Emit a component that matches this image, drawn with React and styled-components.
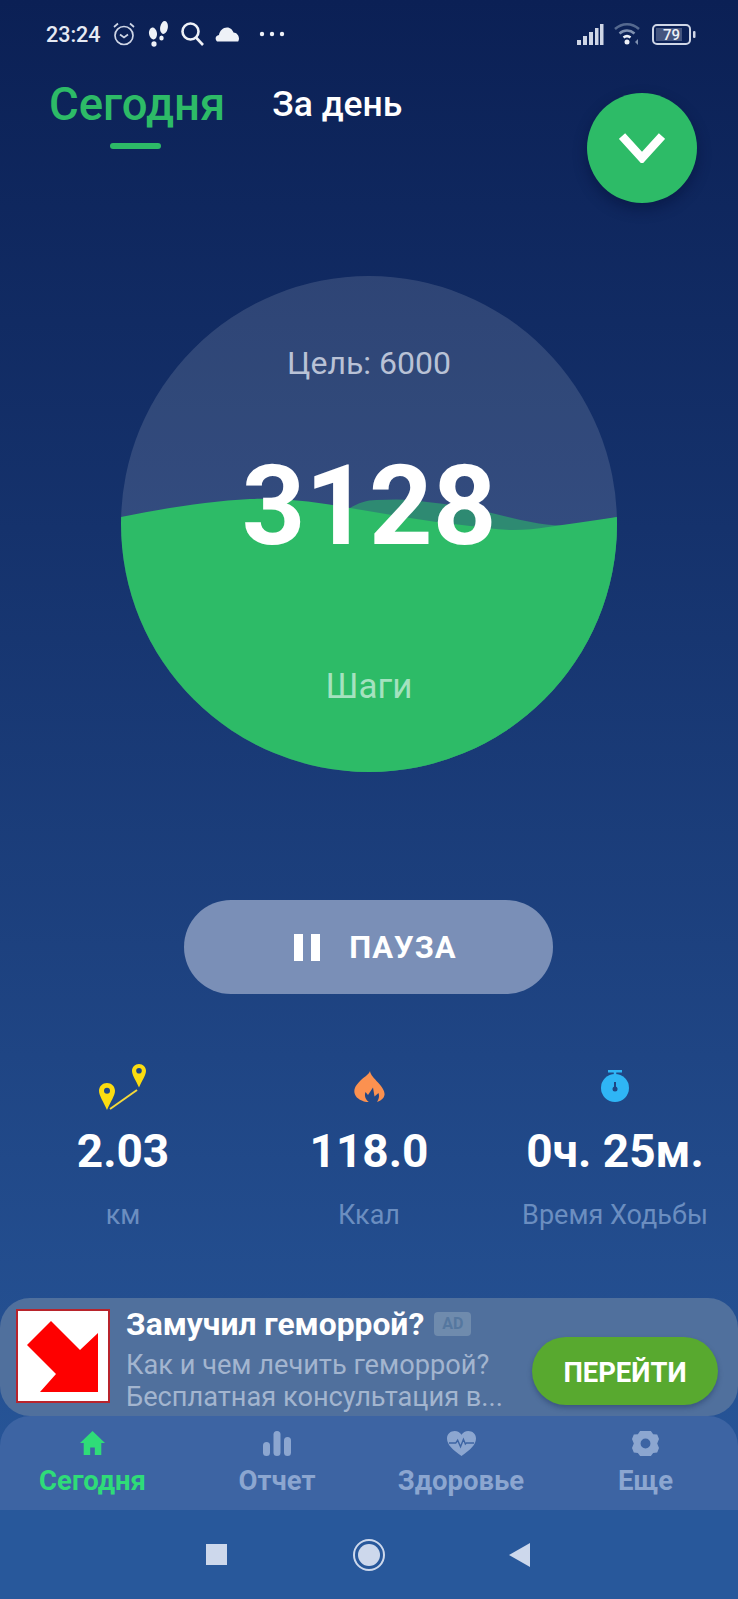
import React from 'react'
import styled, { createGlobalStyle } from 'styled-components'

const GlobalStyle = createGlobalStyle`
	html, body {
		margin: 0;
		padding: 0;
		background: #0a1f54;
	}
	* {
		box-sizing: border-box;
	}
`

const Page = styled.div`
	position: relative;
	width: 738px;
	height: 1599px;
	display: flex;
	flex-direction: column;
	overflow: hidden;
	font-family: Roboto, "Liberation Sans", sans-serif;
	color: #fff;
	background: linear-gradient(180deg, #0b2055 0%, #15326c 33%, #1f4584 66%, #295a9e 100%);
`

const StatusBar = styled.div`
	height: 68px;
	padding: 0 42px 0 46px;
	display: flex;
	align-items: center;
	justify-content: space-between;
`

const StatusGroup = styled.div`
	display: flex;
	align-items: center;
`

const Clock = styled.span`
	font-size: 21.5px;
	font-weight: 500;
	color: #e6eaf4;
	margin-right: 11px;
`

const Tabs = styled.div`
	height: 85px;
	padding-left: 49px;
	display: flex;
	align-items: flex-start;
	gap: 47px;
`

const Tab = styled.div`
	position: relative;
	height: 81px;
	display: flex;
	align-items: flex-start;
	font-size: ${p => (p.$active ? '45.5px' : '35.5px')};
	font-weight: 500;
	line-height: ${p => (p.$active ? '74px' : '73px')};
	color: ${p => (p.$active ? '#2dbb67' : '#fff')};

	${p => p.$active && `
		&::after {
			content: '';
			position: absolute;
			left: 61px;
			bottom: 0;
			width: 51px;
			height: 6px;
			border-radius: 3px;
			background: #2dbb67;
		}
	`}
`

const Fab = styled.div`
	position: absolute;
	left: 587px;
	top: 93px;
	width: 110px;
	height: 110px;
	border-radius: 50%;
	background: #2dbb67;
	box-shadow: 0 6px 14px rgba(4, 14, 50, 0.45);
	display: flex;
	align-items: center;
	justify-content: center;
`

const Gauge = styled.div`
	position: relative;
	width: 496px;
	height: 496px;
	margin: 123px auto 0;
	border-radius: 50%;
	overflow: hidden;
	background: rgba(255, 255, 255, 0.13);
	display: flex;
	flex-direction: column;
	align-items: center;
`

const WaveSvg = styled.svg`
	position: absolute;
	inset: 0;
	width: 100%;
	height: 100%;
`

const GaugeText = styled.div`
	position: relative;
	margin-top: ${p => p.$top}px;
	font-size: ${p => p.$size}px;
	font-weight: ${p => p.$weight || 400};
	line-height: ${p => p.$line}px;
	color: ${p => p.$color};
`

const PauseButton = styled.div`
	width: 369px;
	height: 94px;
	margin: 128px 0 0 184px;
	padding-left: 14px;
	border-radius: 47px;
	background: #7a8fb7;
	display: flex;
	align-items: center;
	justify-content: center;
	gap: 29px;
	font-size: 31px;
	font-weight: 700;
	letter-spacing: 1px;
`

const PauseBars = styled.span`
	width: 26px;
	height: 27px;
	border-left: 9px solid #fff;
	border-right: 9px solid #fff;
`

const Stats = styled.div`
	margin-top: 58px;
	display: grid;
	grid-template-columns: 246px 246px 246px;
`

const Stat = styled.div`
	display: flex;
	flex-direction: column;
	align-items: center;
`

const StatIcon = styled.div`
	height: 58px;
	padding-bottom: ${p => p.$lift || 0}px;
	display: flex;
	align-items: flex-end;
`

const StatValue = styled.div`
	margin-top: 14px;
	font-size: 46px;
	font-weight: 700;
	line-height: 54px;
	white-space: nowrap;
`

const StatLabel = styled.div`
	margin-top: 21px;
	font-size: 27px;
	line-height: 32px;
	color: #6b8ec0;
	white-space: nowrap;
`

const Ad = styled.div`
	margin-top: auto;
	height: 118px;
	padding: 11px 20px 0 16px;
	display: flex;
	align-items: flex-start;
	border-radius: 30px;
	background: #50709d;
`

const AdImage = styled.div`
	flex: none;
	width: 94px;
	height: 94px;
	border: 2px solid #b8242c;
	background: #fff;
`

const AdBody = styled.div`
	flex: 1;
	min-width: 0;
	padding-left: 16px;
`

const AdTitle = styled.div`
	display: flex;
	align-items: center;
	gap: 10px;
	font-size: 31.8px;
	font-weight: 700;
	line-height: 32px;
	margin-top: -1px;
`

const AdBadge = styled.span`
	width: 37px;
	height: 24px;
	border-radius: 4px;
	background: #6f8bad;
	color: #55779f;
	font-size: 16px;
	font-weight: 700;
	line-height: 24px;
	text-align: center;
`

const AdLine = styled.div`
	margin-top: ${p => p.$top || 0}px;
	font-size: 27.2px;
	line-height: 32px;
	color: #a3b5cf;
	white-space: nowrap;
`

const AdButton = styled.div`
	flex: none;
	width: 186px;
	height: 68px;
	margin-top: 28px;
	margin-left: -20px;
	padding-top: 3px;
	border-radius: 34px;
	background: #58a92f;
	box-shadow: 0 3px 5px rgba(20, 40, 80, 0.35);
	display: flex;
	align-items: center;
	justify-content: center;
	font-size: 27.4px;
	font-weight: 700;
`

const BottomNav = styled.div`
	height: 94px;
	display: grid;
	grid-template-columns: 185px 184px 184px 185px;
	border-radius: 30px 30px 0 0;
	background: #3d64a3;
`

const NavItem = styled.div`
	padding-top: 14px;
	display: flex;
	flex-direction: column;
	align-items: center;
	color: ${p => (p.$active ? '#2fdc78' : '#8ca6d0')};
`

const NavIcon = styled.div`
	height: 26px;
	display: flex;
	align-items: center;
`

const NavLabel = styled.div`
	margin-top: 10px;
	font-size: 27.5px;
	font-weight: 700;
	line-height: 30px;
`

const SystemBar = styled.div`
	height: 89px;
	background: #28589b;
	display: grid;
	grid-template-columns: 153px 153px 153px;
	justify-content: center;
	justify-items: center;
	align-items: center;
`

const SquareKey = styled.span`
	width: 21px;
	height: 21px;
	background: #cdd8ec;
`

const RoundKey = styled.span`
	width: 32px;
	height: 32px;
	border-radius: 50%;
	border: 2px solid #cdd8ec;
	padding: 3px;
	background: #cdd8ec content-box;
`

const BackKey = styled.span`
	width: 0;
	height: 0;
	margin-right: 5px;
	border-top: 12px solid transparent;
	border-bottom: 12px solid transparent;
	border-right: 21px solid #cdd8ec;
`

const StatusIcons = () => (
	<>
		<svg width="24" height="26" viewBox="0 0 24 26" fill="none" stroke="#cfd6e6" strokeWidth="1.7" style={{ marginRight: 12 }}>
			<circle cx="12" cy="14.5" r="9" />
			<path d="M8 13.5l4 3 4-3" />
			<path d="M2 6l4-3.5M22 6l-4-3.5" />
		</svg>
		<svg width="21" height="26" viewBox="0 0 21 26" fill="#eef1f7" style={{ marginRight: 11 }}>
			<ellipse cx="5" cy="12.500" rx="4" ry="6" transform="rotate(-8 5 12.500)" />
			<ellipse cx="6" cy="23" rx="2.600" ry="2.800" />
			<ellipse cx="16" cy="6.500" rx="3.800" ry="6.500" transform="rotate(10 16 6.500)" />
			<ellipse cx="13.500" cy="17" rx="2.200" ry="2.500" />
		</svg>
		<svg width="24" height="26" viewBox="0 0 24 26" fill="none" stroke="#eef1f7" strokeWidth="2.6" style={{ marginRight: 11 }}>
			<circle cx="10.5" cy="10.5" r="8" />
			<path d="M16 16.5l7 7.5" />
		</svg>
		<svg width="24" height="16" viewBox="0 0 24 16" fill="#eef1f7" style={{ marginRight: 20 }}>
			<path d="M2 15.5C-.5 13 .5 9.5 4 9c.5-4 4-7.5 8-7.5 3.500 0 5.500 2.500 6.500 5 3 0 5.500 3 5.500 6 0 1-.3 2-.8 3z" />
		</svg>
		<svg width="26" height="6" viewBox="0 0 26 6" fill="#eef1f7">
			<circle cx="3" cy="3" r="2.200" />
			<circle cx="13" cy="3" r="2.200" />
			<circle cx="23" cy="3" r="2.200" />
		</svg>
	</>
)

const SystemIcons = () => (
	<>
		<svg width="27" height="21" viewBox="0 0 27 21" fill="#cfd6e6" style={{ marginRight: 10 }}>
			<rect x="0" y="16" width="4" height="5" />
			<rect x="6" y="12" width="4" height="9" />
			<rect x="12" y="8" width="4" height="13" />
			<rect x="18" y="4" width="3.500" height="17" />
			<rect x="23" y="0" width="3.500" height="21" />
		</svg>
		<svg width="28" height="24" viewBox="0 0 28 24" fill="none" style={{ marginRight: 10 }}>
			<path d="M1 7c7-6.500 17-6.500 24 0" stroke="#55698f" strokeWidth="2.500" />
			<path d="M5.500 11.500c4.500-4 10.500-4 15 0" stroke="#7f90b0" strokeWidth="2.500" />
			<path d="M9.500 15.500c2-1.600 5-1.600 7 0" stroke="#eef1f7" strokeWidth="2.500" />
			<circle cx="13" cy="20" r="2.500" fill="#eef1f7" />
			<path d="M24 17l-3 3 3 3z" fill="#7f90b0" />
		</svg>
		<svg width="44" height="21" viewBox="0 0 44 21">
			<rect x="1" y="1" width="37" height="19" rx="4" fill="none" stroke="#cfd6e6" strokeWidth="2" />
			<rect x="4" y="4" width="26" height="13" fill="#44557f" />
			<text x="19.500" y="16" textAnchor="middle" fontSize="15" fontWeight="500" fill="#eef1f7" fontFamily="Roboto, sans-serif">79</text>
			<rect x="41" y="7" width="2.500" height="7" rx="1" fill="#cfd6e6" />
		</svg>
	</>
)

const RouteIcon = () => (
	<svg width="48" height="46" viewBox="0 0 48 46">
		<path fillRule="evenodd" fill="#fbdc10" d="M8 19c4.400 0 8 3.400 8 7.700 0 5-4.500 11-8 19.300-3.500-8.300-8-14.300-8-19.300C0 22.400 3.600 19 8 19zm0 4.700a3 3 0 100 6 3 3 0 000-6z" />
		<path fillRule="evenodd" fill="#fbdc10" d="M40 0c3.900 0 7 3 7 6.800 0 4.500-4 9.700-7 16.700-3-7-7-12.200-7-16.700C33 3 36.100 0 40 0zm0 4a2.800 2.800 0 100 5.600A2.800 2.800 0 0040 4z" />
		<path d="M11 45l27-19" stroke="#f5d93a" strokeWidth="2" />
	</svg>
)

const FlameIcon = () => (
	<svg width="31" height="31" viewBox="0 0 31 31">
		<path fill="#fb9150" d="M16 0c.5 4 4 7 8 11.500 4 4.500 7 8.500 6.500 12.500-.5 3-3 5.500-7.500 7 2-2.500 2.500-6 1.500-9l-4 3.500-1.500-9-5 7.500-2.500-3c-1.500 4 0 8 4 10.500C7 30.500 1.500 27 .5 22 -.5 17 3 13 6.500 9.500 10 6 14.500 4 16 0z" />
	</svg>
)

const TimerIcon = () => (
	<svg width="28" height="32" viewBox="0 0 28 32">
		<path d="M7 1.300h14M14 1.300v6" stroke="#2fb5f5" strokeWidth="2.500" />
		<circle cx="14" cy="18" r="14" fill="#2fb5f5" />
		<path d="M14 12v7" stroke="#1f4584" strokeWidth="2" />
		<circle cx="14" cy="19" r="2.500" fill="#1f4584" />
	</svg>
)

const HomeIcon = () => (
	<svg width="25" height="24" viewBox="0 0 27 26" fill="currentColor" preserveAspectRatio="none">
		<path d="M13.500 0L0 13h4v13h7v-8h5v8h7V13h4z" />
	</svg>
)

const BarsIcon = () => (
	<svg width="28" height="25" viewBox="0 0 28 25" fill="currentColor">
		<rect x="0" y="11" width="7" height="14" rx="3.500" />
		<rect x="10.500" y="0" width="7" height="25" rx="3.500" />
		<rect x="21" y="6" width="7" height="19" rx="3.500" />
	</svg>
)

const HeartIcon = () => (
	<svg width="29" height="25" viewBox="0 0 30 27" preserveAspectRatio="none">
		<path fill="currentColor" d="M15 27C6 20 0 15 0 8c0-5 4-8 8-8 3 0 5.500 1.500 7 4 1.500-2.500 4-4 7-4 4 0 8 3 8 8 0 7-6 12-15 19z" />
		<path fill="none" stroke="#3d64a3" strokeWidth="1.500" d="M2 13h7l2-3 3 7 3-8 2 5 1-1h8" />
	</svg>
)

const GearIcon = () => (
	<svg width="27" height="25" viewBox="0 0 30 28" fill="currentColor" preserveAspectRatio="none">
		<path fillRule="evenodd" d="M9 0h12l2.500 3.500 4.500.5 2 5-2 5 2 5-2 5-4.500.5L21 28H9l-2.500-3.500L2 24l-2-5 2-5-2-5 2-5 4.500-.5zm6 8.500a5.500 5.500 0 100 11 5.500 5.500 0 000-11z" />
	</svg>
)

const stats = [
	{ icon: <RouteIcon />, lift: 0, value: '2.03', label: 'км' },
	{ icon: <FlameIcon />, lift: 8, value: '118.0', label: 'Ккал' },
	{ icon: <TimerIcon />, lift: 8, value: '0ч. 25м.', label: 'Время Ходьбы' },
]

const navItems = [
	{ icon: <HomeIcon />, label: 'Сегодня', active: true },
	{ icon: <BarsIcon />, label: 'Отчет' },
	{ icon: <HeartIcon />, label: 'Здоровье' },
	{ icon: <GearIcon />, label: 'Еще' },
]

export default function App() {
	return (
		<Page>
			<GlobalStyle />
			<StatusBar>
				<StatusGroup>
					<Clock>23:24</Clock>
					<StatusIcons />
				</StatusGroup>
				<StatusGroup>
					<SystemIcons />
				</StatusGroup>
			</StatusBar>
			<Tabs>
				<Tab $active>Сегодня</Tab>
				<Tab>За день</Tab>
			</Tabs>
			<Fab>
				<svg width="46" height="30" viewBox="0 0 46 30" fill="none" stroke="#fff" strokeWidth="8.500">
					<path d="M3 3l20 22L43 3" />
				</svg>
			</Fab>
			<Gauge>
				<WaveSvg viewBox="121 276 496 496">
					<path fill="#2e8a72" d="M350 508C358 503 367 500 376 500C395 499 412 499 427 502C445 504 462 506 479 510C497 514 514 519 531 522C545 525 558 526 572 525C587 524 602 520 617 517V772H350Z" />
					<path fill="#2dbb67" d="M121 517C165 508 210 501 250 499C290 498 320 503 350 508C370 511 390 515 410 518C428 521 445 523 462 525C480 527 497 530 513 530C525 530 537 529 548 527C572 524 595 520 617 517V772H121Z" />
				</WaveSvg>
				<GaugeText $top={66} $size={32} $line={42} $color="#b9c2d6">Цель: 6000</GaugeText>
				<GaugeText $top={54} $size={111} $weight={700} $line={136} $color="#fff">3128</GaugeText>
				<GaugeText $top={90} $size={35} $line={46} $color="#a4e2bf">Шаги</GaugeText>
			</Gauge>
			<PauseButton>
				<PauseBars />
				ПАУЗА
			</PauseButton>
			<Stats>
				{stats.map(s => (
					<Stat key={s.label}>
						<StatIcon $lift={s.lift}>{s.icon}</StatIcon>
						<StatValue>{s.value}</StatValue>
						<StatLabel>{s.label}</StatLabel>
					</Stat>
				))}
			</Stats>
			<Ad>
				<AdImage>
					<svg width="90" height="90" viewBox="0 0 90 90">
						<path fill="#fe0000" d="M33 10L9 34 38 63 22 81H80V22L62 39z" />
					</svg>
				</AdImage>
				<AdBody>
					<AdTitle>
						Замучил геморрой?
						<AdBadge>AD</AdBadge>
					</AdTitle>
					<AdLine $top={9}>Как и чем лечить геморрой?</AdLine>
					<AdLine>Бесплатная консультация в...</AdLine>
				</AdBody>
				<AdButton>ПЕРЕЙТИ</AdButton>
			</Ad>
			<BottomNav>
				{navItems.map(n => (
					<NavItem key={n.label} $active={n.active}>
						<NavIcon>{n.icon}</NavIcon>
						<NavLabel>{n.label}</NavLabel>
					</NavItem>
				))}
			</BottomNav>
			<SystemBar>
				<SquareKey />
				<RoundKey />
				<BackKey />
			</SystemBar>
		</Page>
	)
}
